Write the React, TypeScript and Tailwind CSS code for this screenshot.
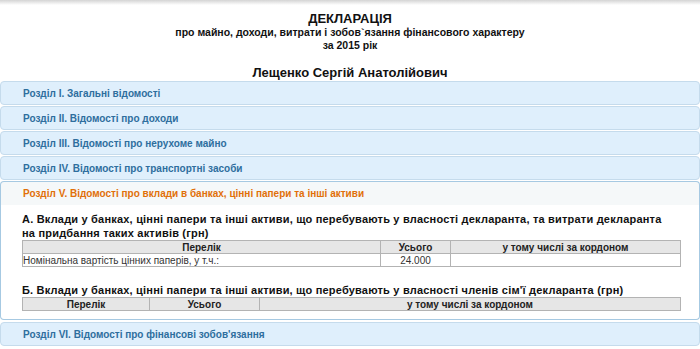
import React from 'react';
import clsx from 'clsx';

const font = { fontFamily: '"Liberation Sans", Arial, sans-serif' };

const sections = [
  'Розділ I. Загальні відомості',
  'Розділ II. Відомості про доходи',
  'Розділ III. Відомості про нерухоме майно',
  'Розділ IV. Відомості про транспортні засоби',
  'Розділ V. Відомості про вклади в банках, цінні папери та інші активи',
];

const Header: React.FC<{ title: string; active?: boolean }> = ({ title, active = false }) => (
  <div
    className={clsx(
      'h-[24px] flex items-center pl-[22px] text-[10px] font-bold border rounded-t-[4px]',
      active
        ? 'bg-[#f5f8f9] border-[#a6c9e2] text-[#e17009] border-b-0'
        : 'bg-[#dfeffc] border-[#c5dbec] text-[#2e6e9e] rounded-b-[4px]'
    )}
  >
    {title}
  </div>
);

const th = 'border border-[#b3b3b3] bg-[#e6e6e6] font-bold text-[10px] text-[#222] h-[13px] leading-[11px] text-center';
const td = 'border border-[#b3b3b3] bg-white text-[10px] text-[#333] h-[13px] leading-[11px]';

export default function App() {
  return (
    <div className="w-[700px] h-[349px] bg-white overflow-hidden text-[#111]" style={font}>
      <div className="h-[5px] bg-gradient-to-b from-[#d4d4d4] to-white" />
      <div className="text-center font-bold pt-[7px]">
        <div className="text-[13px] leading-[14px]">ДЕКЛАРАЦІЯ</div>
        <div className="text-[10.5px] leading-[13px]">про майно, доходи, витрати і зобов`язання фінансового характеру</div>
        <div className="text-[10.5px] leading-[13px]">за 2015 рік</div>
        <div className="text-[13px] leading-[15px] mt-[13px]">Лещенко Сергій Анатолійович</div>
      </div>
      <div className="mt-[1px] flex flex-col gap-[1px]">
        {sections.slice(0, 4).map((s) => (
          <Header key={s} title={s} />
        ))}
        <div>
          <Header title={sections[4]} active />
          <div className="border border-t-0 border-[#a6c9e2] bg-white rounded-b-[4px] pl-[21px] pr-[8px] pt-[7px] pb-[8px]">
            <div className="max-w-[648px] text-[11px] font-bold leading-[14px] tracking-[0.2px]">
              А. Вклади у банках, цінні папери та інші активи, що перебувають у власності декларанта, та витрати декларанта на придбання таких активів (грн)
            </div>
            <table className="w-[659px] border-collapse">
              <tbody>
                <tr>
                  <td className={th}>Перелік</td>
                  <td className={clsx(th, 'w-[70px]')}>Усього</td>
                  <td className={clsx(th, 'w-[230px]')}>у тому числі за кордоном</td>
                </tr>
                <tr>
                  <td className={td}>Номінальна вартість цінних паперів, у т.ч.:</td>
                  <td className={clsx(td, 'text-center')}>24.000</td>
                  <td className={td}></td>
                </tr>
              </tbody>
            </table>
            <div className="text-[11px] font-bold leading-[14px] tracking-[0.2px] mt-[16px]">
              Б. Вклади у банках, цінні папери та інші активи, що перебувають у власності членів сім'ї декларанта (грн)
            </div>
            <table className="w-[659px] border-collapse">
              <tbody>
                <tr>
                  <td className={clsx(th, 'w-[127px]')}>Перелік</td>
                  <td className={clsx(th, 'w-[110px]')}>Усього</td>
                  <td className={th}>у тому числі за кордоном</td>
                </tr>
              </tbody>
            </table>
          </div>
        </div>
        <div className="mt-[1px]">
          <Header title="Розділ VI. Відомості про фінансові зобов'язання" />
        </div>
      </div>
    </div>
  );
}
